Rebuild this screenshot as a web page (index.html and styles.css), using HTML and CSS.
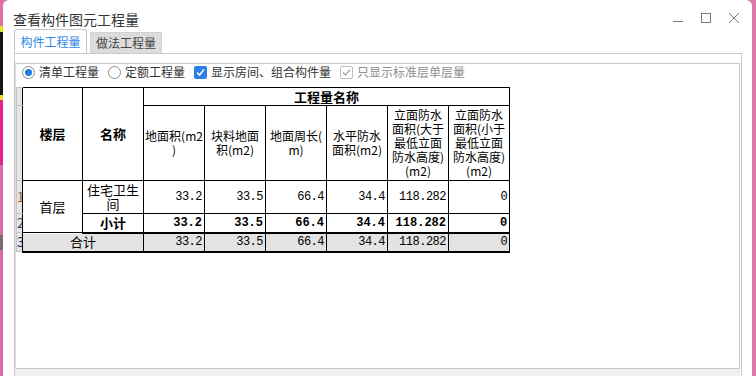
FILE: index.html
```html
<!DOCTYPE html>
<html lang="zh-CN">
<head>
    <meta charset="utf-8">
    <link rel="stylesheet" href="styles.css">
</head>
<body>
    <div class="desk">
        <div class="dialog">
            <div class="titlebar">
                <span class="title">查看构件图元工程量</span>
                <div class="winbtns">
                    <span class="winbtn"><svg width="12" height="12" viewBox="0 0 12 12"><path d="M1 9.5H11"/></svg></span>
                    <span class="winbtn"><svg width="12" height="12" viewBox="0 0 12 12"><rect x="1.5" y="1.5" width="9" height="9"/></svg></span>
                    <span class="winbtn"><svg width="12" height="12" viewBox="0 0 12 12"><path d="M1 1L11 11M11 1L1 11"/></svg></span>
                </div>
            </div>
            <div class="tabs">
                <div class="tab active">构件工程量</div>
                <div class="tab">做法工程量</div>
            </div>
            <div class="pane">
                <div class="box">
                    <div class="opts">
                        <label class="opt"><span class="radio on"></span>清单工程量</label>
                        <label class="opt"><span class="radio"></span>定额工程量</label>
                        <label class="opt"><span class="check"><svg width="11" height="11" viewBox="0 0 11 11"><path d="M2 5.5L4.5 8L9 2.5"/></svg></span>显示房间、组合构件量</label>
                        <label class="opt dim"><span class="check off"><svg width="11" height="11" viewBox="0 0 11 11"><path d="M2 5.5L4.5 8L9 2.5"/></svg></span>只显示标准层单层量</label>
                    </div>
                    <table class="qty">
                        <colgroup>
                            <col class="c-rh">
                            <col class="c-floor">
                            <col class="c-q"><col class="c-q"><col class="c-q"><col class="c-q"><col class="c-q"><col class="c-q"><col class="c-q">
                        </colgroup>
                        <tr class="h1">
                            <td class="rh"></td>
                            <th rowspan="2">楼层</th>
                            <th rowspan="2">名称</th>
                            <th colspan="6" class="group">工程量名称</th>
                        </tr>
                        <tr class="h2">
                            <td class="rh"></td>
                            <th class="sub-h">地面积(m2<br>)</th>
                            <th class="sub-h">块料地面<br>积(m2)</th>
                            <th class="sub-h">地面周长(<br>m)</th>
                            <th class="sub-h">水平防水<br>面积(m2)</th>
                            <th class="sub-h">立面防水<br>面积(大于<br>最低立面<br>防水高度)<br>(m2)</th>
                            <th class="sub-h">立面防水<br>面积(小于<br>最低立面<br>防水高度)<br>(m2)</th>
                        </tr>
                        <tr class="r1">
                            <td class="rh n1">1</td>
                            <td rowspan="2" class="txt">首层</td>
                            <td class="txt">住宅卫生间</td>
                            <td class="num">33.2</td>
                            <td class="num">33.5</td>
                            <td class="num">66.4</td>
                            <td class="num">34.4</td>
                            <td class="num">118.282</td>
                            <td class="num">0</td>
                        </tr>
                        <tr class="r2 sub">
                            <td class="rh n2">2</td>
                            <td class="txt">小计</td>
                            <td class="num">33.2</td>
                            <td class="num">33.5</td>
                            <td class="num">66.4</td>
                            <td class="num">34.4</td>
                            <td class="num">118.282</td>
                            <td class="num">0</td>
                        </tr>
                        <tr class="r3 total">
                            <td class="rh n3">3</td>
                            <td colspan="2" class="txt">合计</td>
                            <td class="num">33.2</td>
                            <td class="num">33.5</td>
                            <td class="num">66.4</td>
                            <td class="num">34.4</td>
                            <td class="num">118.282</td>
                            <td class="num">0</td>
                        </tr>
                    </table>
                </div>
                <div class="hscroll"></div>
            </div>
        </div>
    </div>
</body>
</html>
```

FILE: styles.css
```css
* {
    box-sizing: border-box;
}

html, body {
    margin: 0;
}

body {
    width: 756px;
    height: 376px;
    overflow: hidden;
    font-family: "Noto Sans CJK SC", "Noto Sans", sans-serif;
    font-size: 12px;
    color: #333;
    background:
        linear-gradient(#e070a8 0 26px, #e6df2a 26px 32px, #151515 32px 95px, #e6df2a 95px 100px,
            #e2228c 100px 165px, #d76ca6 165px 235px, #7a6a70 235px 250px, #d76ca6 250px) left top / 3px 100% no-repeat,
        #dc77ac;
}

div.desk {
    display: flex;
    height: 100%;
    padding: 0 4px 0 3px;
}

div.dialog {
    flex: 1;
    display: flex;
    flex-direction: column;
    background-color: #fff;
    border-radius: 6px 6px 0 0;
    overflow: hidden;
}

/* title bar */
div.titlebar {
    display: flex;
    align-items: flex-start;
    height: 29px;
    padding-left: 10px;
}

span.title {
    margin-top: 9px;
    font-size: 14px;
    line-height: 20px;
    color: #333;
}

div.winbtns {
    display: flex;
    gap: 16px;
    margin: 12px 12px 0 auto;
}

span.winbtn svg {
    display: block;
    fill: none;
    stroke: #7a7a7a;
    stroke-width: 1;
}

/* tabs */
div.tabs {
    display: flex;
    align-items: flex-end;
    height: 24px;
    padding-left: 11px;
}

div.tab {
    width: 72px;
    height: 21px;
    margin-left: 3px;
    background-color: #dcdcdc;
    border: 1px solid #d2d2d2;
    border-bottom: none;
    text-align: center;
    line-height: 20px;
    color: #444;
}

div.tab.active {
    width: 73px;
    height: 24px;
    margin-left: 0;
    background-color: #fff;
    border-color: #c8c8c8;
    border-radius: 3px 3px 0 0;
    line-height: 23px;
    color: #2f86e8;
}

/* tab pane */
div.pane {
    flex: 1;
    display: flex;
    flex-direction: column;
    margin: 0 10px 0 11px;
    padding: 9px 1px 0 0;
    border: 1px solid #c9c9c9;
    border-bottom: none;
}

div.box {
    flex: 1;
    border: 1px solid #c9c9c9;
    border-left-color: #dedede;
}

div.hscroll {
    height: 7px;
    background-color: #f0f0f0;
}

/* options row */
div.opts {
    display: flex;
    align-items: center;
    height: 16px;
    margin-bottom: 7px;
    padding-left: 6px;
}

label.opt {
    display: inline-flex;
    align-items: center;
    gap: 4px;
    margin-right: 9px;
    line-height: 16px;
    color: #333;
}

label.opt.dim {
    color: #8e8e8e;
}

span.radio {
    display: grid;
    place-items: center;
    width: 13px;
    height: 13px;
    border: 1px solid #8c8c8c;
    border-radius: 50%;
    background-color: #fff;
}

span.radio.on::after {
    content: "";
    width: 7px;
    height: 7px;
    border-radius: 50%;
    background-color: #1f7be2;
}

span.check {
    display: grid;
    place-items: center;
    width: 13px;
    height: 13px;
    border-radius: 2px;
    background-color: #2b7ee5;
}

span.check svg {
    fill: none;
    stroke: #fff;
    stroke-width: 1.6;
}

span.check.off {
    background-color: #fff;
    border: 1px solid #bdbdbd;
}

span.check.off svg {
    stroke: #a8a8a8;
    stroke-width: 1.3;
}

/* quantity table */
table.qty {
    border-collapse: collapse;
    table-layout: fixed;
    width: 494px;
    color: #000;
}

col.c-rh {
    width: 6px;
}

col.c-floor {
    width: 60px;
}

col.c-q {
    width: 61px;
}

table.qty th,
table.qty td {
    border: 1px solid #000;
    padding: 0 2px;
    font-size: 12px;
    line-height: 14px;
    text-align: center;
    vertical-align: middle;
    overflow: hidden;
}

table.qty th {
    font-weight: bold;
    font-size: 13px;
}

table.qty th.sub-h {
    font-weight: normal;
    font-size: 12px;
    line-height: 14px;
    padding: 0;
}

tr.h1 {
    height: 18px;
}

tr.h2 {
    height: 75px;
}

tr.r1 {
    height: 33px;
}

tr.r2 {
    height: 19px;
}

tr.r3 {
    height: 19px;
}

table.qty td.rh {
    border-color: #c4c4c4;
    border-right: none;
    background-color: #e6e6e6;
    padding: 0;
    font-size: 13px;
    text-align: left;
    white-space: nowrap;
}

td.n1 {
    color: #9a5b1e;
}

td.n2 {
    color: #34406e;
}

td.n3 {
    color: #2b2b78;
}

table.qty td.txt {
    font-size: 13px;
}

table.qty td.num {
    text-align: right;
    padding-right: 2px;
    font-family: "Liberation Mono", monospace;
    letter-spacing: -0.5px;
}

tr.sub td {
    font-weight: bold;
    border-bottom-width: 2px;
}

tr.sub td.num {
    letter-spacing: 0;
}

tr.total td {
    background-color: #e3e3e3;
    border-bottom-width: 2px;
}

tr.sub td.rh,
tr.total td.rh {
    border-bottom-width: 1px;
    font-weight: normal;
}
```
